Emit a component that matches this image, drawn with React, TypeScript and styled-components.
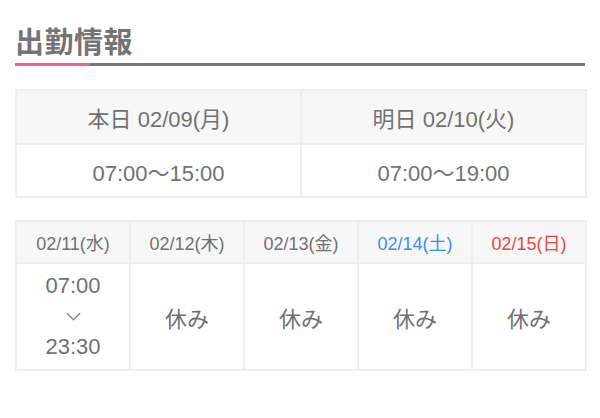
import styled, { createGlobalStyle } from "styled-components";

const GlobalStyle = createGlobalStyle`
  html, body {
    margin: 0;
    padding: 0;
    background: #ffffff;
  }
  body {
    font-family: "Liberation Sans", "Noto Sans CJK JP", sans-serif;
    color: #707070;
  }
`;

type Day = {
  label: string;
  tone?: "sat" | "sun";
  from?: string;
  to?: string;
};

const week: Day[] = [
  { label: "02/11(水)", from: "07:00", to: "23:30" },
  { label: "02/12(木)" },
  { label: "02/13(金)" },
  { label: "02/14(土)", tone: "sat" },
  { label: "02/15(日)", tone: "sun" },
];

const App = () => {
  return (
    <>
      <GlobalStyle />
      <Page>
        <Heading>出勤情報</Heading>

        <TodayGrid>
          <HeadCell>本日 02/09(月)</HeadCell>
          <HeadCell>明日 02/10(火)</HeadCell>
          <TodayCell>07:00〜15:00</TodayCell>
          <TodayCell>07:00〜19:00</TodayCell>
        </TodayGrid>

        <WeekGrid>
          {week.map((d) => (
            <DayHead key={d.label} $tone={d.tone}>
              {d.label}
            </DayHead>
          ))}
          {week.map((d) => (
            <DayCell key={d.label + "-body"}>
              {d.from ? (
                <Shift>
                  <span>{d.from}</span>
                  <Chevron viewBox="0 0 16 9">
                    <path d="M1 1 L8 8 L15 1" />
                  </Chevron>
                  <span>{d.to}</span>
                </Shift>
              ) : (
                "休み"
              )}
            </DayCell>
          ))}
        </WeekGrid>
      </Page>
    </>
  );
};

const Page = styled.div`
  width: 572px;
  padding: 26px 0 0 15px;
`;

const Heading = styled.h2`
  position: relative;
  margin: 0;
  padding-bottom: 3px;
  font-size: 29px;
  line-height: 34px;
  font-weight: bold;
  color: #747474;
  letter-spacing: 0.5px;
  border-bottom: 3px solid #777777;
  width: 570px;

  &::after {
    content: "";
    position: absolute;
    left: 0;
    bottom: -3px;
    width: 75px;
    height: 3px;
    background: #f25f92;
  }
`;

const TodayGrid = styled.div`
  display: grid;
  grid-template-columns: 1fr 1fr;
  grid-template-rows: 52px 51px;
  gap: 2px;
  padding: 2px;
  margin-top: 23px;
  background: #eeeeee;
`;

const HeadCell = styled.div`
  display: flex;
  align-items: center;
  justify-content: center;
  background: #f7f7f7;
  font-size: 22px;
  color: #717171;
`;

const TodayCell = styled(HeadCell)`
  background: #ffffff;
`;

const WeekGrid = styled.div`
  display: grid;
  grid-template-columns: repeat(5, 1fr);
  grid-template-rows: 40px 105px;
  gap: 2px;
  padding: 2px;
  margin-top: 22px;
  background: #eeeeee;
`;

const DayHead = styled.div<{ $tone?: "sat" | "sun" }>`
  display: flex;
  align-items: center;
  justify-content: center;
  background: #f7f7f7;
  font-size: 18px;
  color: ${(p) =>
    p.$tone === "sat" ? "#3f8ee6" : p.$tone === "sun" ? "#e8483f" : "#717171"};
`;

const DayCell = styled.div`
  display: flex;
  align-items: center;
  justify-content: center;
  background: #ffffff;
  font-size: 22px;
  color: #717171;
`;

const Shift = styled.div`
  display: flex;
  flex-direction: column;
  align-items: center;
  line-height: 28px;
`;

const Chevron = styled.svg`
  width: 15px;
  height: 9px;
  margin: 12px 0;
  fill: none;
  stroke: #8a8a8a;
  stroke-width: 1.6;
`;

export default App;
